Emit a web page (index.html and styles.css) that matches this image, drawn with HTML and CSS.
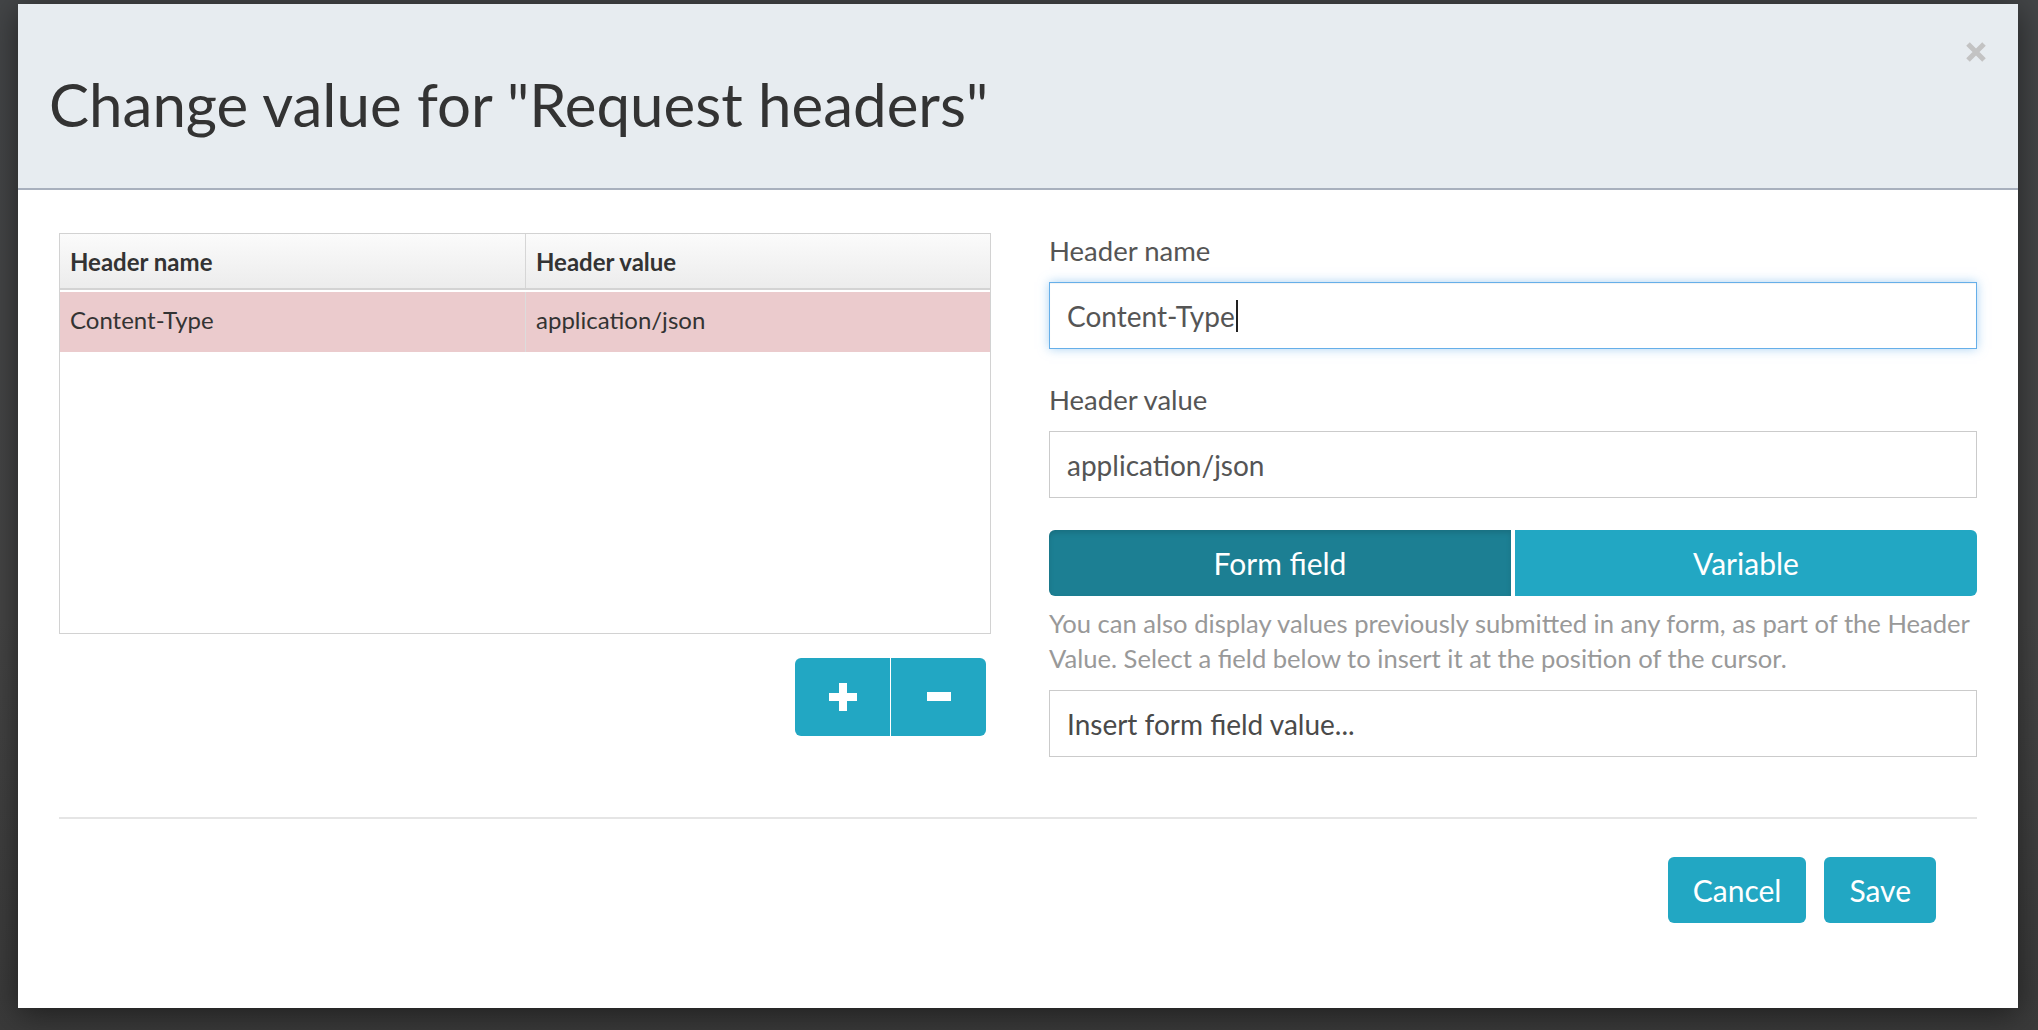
FILE: index.html
```html
<!DOCTYPE html>
<html lang="en">
<head>
<meta charset="utf-8">
<title>Change value for "Request headers"</title>
<link rel="stylesheet" href="styles.css">
</head>
<body>
<div class="modal">
  <div class="modal-header">
    <h1 class="modal-title">Change value for "Request headers"</h1>
    <button class="close" type="button" aria-label="Close">
      <svg width="20" height="20" viewBox="0 0 20 20"><path d="M2 2 L18 18 M18 2 L2 18" stroke="#c3c3c3" stroke-width="5" stroke-linecap="butt"/></svg>
    </button>
  </div>
  <div class="modal-body">
    <div class="columns">
      <div class="col-left">
        <div class="grid">
          <div class="grid-row grid-head">
            <div class="cell">Header name</div>
            <div class="cell">Header value</div>
          </div>
          <div class="grid-row grid-item selected">
            <div class="cell">Content-Type</div>
            <div class="cell">application/json</div>
          </div>
        </div>
        <div class="grid-actions">
          <div class="btn-group">
            <button class="btn btn-icon" type="button" aria-label="Add">
              <svg width="28" height="28" viewBox="0 0 28 28"><rect x="0" y="10" width="28" height="8" fill="#fff"/><rect x="10" y="0" width="8" height="28" fill="#fff"/></svg>
            </button>
            <button class="btn btn-icon" type="button" aria-label="Remove">
              <svg width="24" height="28" viewBox="0 0 24 28"><rect x="0" y="9" width="24" height="9" fill="#fff"/></svg>
            </button>
          </div>
        </div>
      </div>
      <div class="col-right">
        <div class="form-group">
          <label class="label">Header name</label>
          <div class="input focused">Content-Type<span class="caret"></span></div>
        </div>
        <div class="form-group">
          <label class="label">Header value</label>
          <input class="input" type="text" value="application/json">
        </div>
        <div class="toggle">
          <button class="btn toggle-btn active" type="button">Form field</button>
          <button class="btn toggle-btn" type="button">Variable</button>
        </div>
        <p class="help">You can also display values previously submitted in any form, as part of the Header Value. Select a field below to insert it at the position of the cursor.</p>
        <input class="input insert" type="text" value="Insert form field value...">
      </div>
    </div>
  </div>
  <div class="modal-footer">
    <button class="btn btn-footer" type="button">Cancel</button>
    <button class="btn btn-footer" type="button">Save</button>
  </div>
</div>
</body>
</html>
```
FILE: styles.css
```css
* { box-sizing: border-box; }

html, body {
  margin: 0;
  height: 100%;
}

body {
  background: linear-gradient(180deg, #434547 0%, #454545 60%, #3a3a3a 100%);
  font-family: Lato, "Open Sans", "Liberation Sans", sans-serif;
  color: #333;
  overflow: hidden;
}

.modal {
  position: relative;
  margin: 4px 0 0 18px;
  width: 2000px;
  height: 1004px;
  background: #fff;
  box-shadow: 0 6px 30px rgba(0, 0, 0, 0.5);
}

.modal-header {
  height: 186px;
  background: #e7ecf0;
  border-bottom: 2px solid #a8b0bd;
  padding: 64px 31px 0;
}

.modal-title {
  margin: 0;
  font-size: 60px;
  line-height: 1.2;
  font-weight: 400;
  color: #333;
}

.close {
  position: absolute;
  top: 38px;
  right: 32px;
  padding: 0;
  border: 0;
  background: none;
  width: 20px;
  height: 20px;
  display: block;
}
.close svg { display: block; }

.modal-body {
  padding: 43px 41px 60px;
}

.columns {
  display: grid;
  grid-template-columns: 932px 928px;
  column-gap: 58px;
  align-items: start;
}

/* grid / table */
.grid {
  height: 401px;
  border: 1px solid #d2d2d2;
  background: #fff;
}

.grid-row {
  display: grid;
  grid-template-columns: 1fr 1fr;
}

.grid-head {
  height: 56px;
  background: linear-gradient(180deg, #fbfbfb 0%, #ececec 100%);
  border-bottom: 2px solid #d3d3d3;
  font-weight: 700;
}

.grid-item {
  height: 60px;
  margin-top: 2px;
}

.grid-item.selected { background: #ebcbcd; }

.cell {
  display: flex;
  align-items: center;
  padding: 0 10px;
  font-size: 24px;
  color: #333;
}

.grid-item .cell { padding-bottom: 5px; }

.grid-head .cell + .cell { border-left: 1px solid #d6d6d6; }
.grid-item .cell + .cell { border-left: 1px solid #dcdcdc; }

.grid-actions {
  display: flex;
  justify-content: flex-end;
  padding-right: 5px;
  margin-top: 24px;
}

.btn-group {
  display: flex;
  gap: 1px;
  background: #fff;
}

.btn {
  font-family: Lato, "Open Sans", "Liberation Sans", sans-serif;
  border: 0;
  color: #fff;
  background: #22a7c3;
  cursor: pointer;
}

.btn-icon {
  width: 95px;
  height: 78px;
  display: flex;
  align-items: center;
  justify-content: center;
  padding: 0;
}
.btn-icon svg { display: block; }
.btn-group .btn-icon:first-child { border-radius: 6px 0 0 6px; }
.btn-group .btn-icon:last-child { border-radius: 0 6px 6px 0; }

/* right column */
.form-group { margin-bottom: 33px; }

.label {
  display: block;
  font-size: 27.5px;
  line-height: 36px;
  color: #555;
  margin-bottom: 13px;
}

.input {
  display: flex;
  align-items: center;
  width: 100%;
  height: 67px;
  padding: 0 17px;
  border: 1.5px solid #cbcbcb;
  background: #fff;
  font-family: Lato, "Open Sans", "Liberation Sans", sans-serif;
  font-size: 28px;
  color: #555;
  outline: none;
}

.input.focused {
  border-color: #66afe9;
  box-shadow: 0 0 10px rgba(102, 175, 233, 0.55), inset 0 1px 1px rgba(0, 0, 0, 0.05);
}

.caret {
  display: inline-block;
  width: 2px;
  height: 32px;
  background: #222;
  margin-left: 1px;
}

.toggle {
  display: flex;
  gap: 4px;
  margin-top: -1px;
}

.toggle-btn {
  flex: 1;
  height: 66px;
  font-size: 30px;
  padding: 0;
}
.toggle-btn:first-child { border-radius: 6px 0 0 6px; }
.toggle-btn:last-child { border-radius: 0 6px 6px 0; }
.toggle-btn.active {
  background: #1c7f93;
  box-shadow: inset 0 3px 5px rgba(0, 0, 0, 0.12);
}

.help {
  margin: 10px 0 0;
  font-size: 25.6px;
  line-height: 35px;
  color: #999;
}

.input.insert {
  margin-top: 14px;
  color: #4a4a4a;
}

/* footer */
.modal-footer {
  margin: 0 41px;
  border-top: 2px solid #e5e5e5;
  padding: 38px 41px 0 0;
  display: flex;
  justify-content: flex-end;
  gap: 18px;
}

.btn-footer {
  height: 66px;
  padding: 0 25px;
  font-size: 30px;
  border-radius: 6px;
}
```
